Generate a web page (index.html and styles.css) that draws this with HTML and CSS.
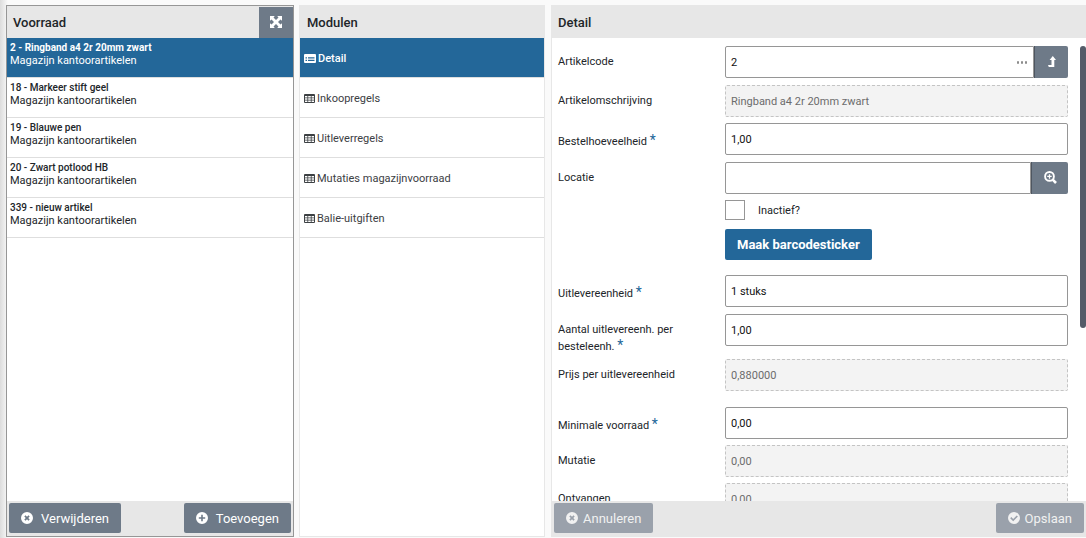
FILE: index.html
```html
<!DOCTYPE html>
<html lang="nl">
<head>
<meta charset="utf-8">
<title>Voorraad</title>
<link rel="stylesheet" href="styles.css">
</head>
<body>
<svg class="sprite" aria-hidden="true">
  <symbol id="i-table" viewBox="0 0 11 9"><path fill="currentColor" fill-rule="evenodd" d="M1 0h9a1 1 0 0 1 1 1v7a1 1 0 0 1-1 1H1a1 1 0 0 1-1-1V1a1 1 0 0 1 1-1zM1 2v1.600h2.400V2zm3.200 0v1.600h2.600V2zm3.400 0v1.600H10V2zM1 4.300v1.500h2.400V4.300zm3.200 0v1.500h2.600V4.300zm3.400 0v1.500H10V4.300zM1 6.500V8h2.400V6.500zm3.200 0V8h2.600V6.500zm3.400 0V8H10V6.500z"/></symbol>
  <symbol id="i-form" viewBox="0 0 12 9"><path fill="currentColor" fill-rule="evenodd" d="M1 0h10a1 1 0 0 1 1 1v7a1 1 0 0 1-1 1H1a1 1 0 0 1-1-1V1a1 1 0 0 1 1-1zM1.500 3.200v1.300H3V3.200zm2.500 0v1.300h6.500V3.200zM1.500 5.800v1.300H3V5.800zm2.500 0v1.300h6.500V5.800z"/></symbol>
  <symbol id="i-expand" viewBox="0 0 12 12"><path fill="currentColor" d="M0 0h4.800L3.500 1.500 6 4l2.500-2.500L7.200 0H12v4.800l-1.500-1.300L8 6l2.500 2.500L12 7.200V12H7.200l1.300-1.500L6 8l-2.500 2.500L4.800 12H0V7.200l1.500 1.300L4 6 1.500 3.500 0 4.800z"/></symbol>
  <symbol id="i-cross" viewBox="0 0 12 12"><path fill="currentColor" fill-rule="evenodd" d="M6 0a6 6 0 1 1 0 12A6 6 0 0 1 6 0zM4.500 3.300 3.300 4.500 4.800 6 3.300 7.500l1.200 1.200L6 7.200l1.500 1.500 1.200-1.200L7.200 6l1.500-1.500-1.200-1.200L6 4.800z"/></symbol>
  <symbol id="i-plus" viewBox="0 0 12 12"><path fill="currentColor" fill-rule="evenodd" d="M6 0a6 6 0 1 1 0 12A6 6 0 0 1 6 0zM5.200 2.800v2.400H2.800v1.600h2.400v2.400h1.600V6.800h2.400V5.200H6.800V2.800z"/></symbol>
  <symbol id="i-check" viewBox="0 0 12 12"><path fill="currentColor" fill-rule="evenodd" d="M6 0a6 6 0 1 1 0 12A6 6 0 0 1 6 0zM3.300 5.100 2.200 6.200l3 3 4.700-4.700-1.200-1.100-3.500 3.500z"/></symbol>
  <symbol id="i-level" viewBox="0 0 8 11"><path fill="currentColor" d="M4.800 0L8 4H6.300v7H.8L0 9h3.500V4H1.600z"/></symbol>
  <symbol id="i-zoom" viewBox="0 0 13 13"><path fill="none" stroke="currentColor" stroke-width="1.900" d="M5.500 1a4.400 4.400 0 1 1 0 8.800 4.400 4.400 0 0 1 0-8.800z"/><path fill="none" stroke="currentColor" stroke-width="2.600" d="M8.700 8.700 12 12"/><path fill="none" stroke="currentColor" stroke-width="1.300" d="M5.500 3.200v4.500M3.200 5.400h4.500"/></symbol>
</svg>
<div class="workspace">
  <section class="panel panel-active">
    <header class="panel-head">
      <h2>Voorraad</h2>
      <button class="expand" type="button" aria-label="Vergroten"><svg class="icon"><use href="#i-expand"/></svg></button>
    </header>
    <ul class="list">
      <li><a class="row stock selected" href="#"><b>2 - Ringband a4 2r 20mm zwart</b><span>Magazijn kantoorartikelen</span></a></li>
      <li><a class="row stock" href="#"><b>18 - Markeer stift geel</b><span>Magazijn kantoorartikelen</span></a></li>
      <li><a class="row stock" href="#"><b>19 - Blauwe pen</b><span>Magazijn kantoorartikelen</span></a></li>
      <li><a class="row stock" href="#"><b>20 - Zwart potlood HB</b><span>Magazijn kantoorartikelen</span></a></li>
      <li><a class="row stock" href="#"><b>339 - nieuw artikel</b><span>Magazijn kantoorartikelen</span></a></li>
    </ul>
    <footer class="panel-foot">
      <button class="btn btn-wide" type="button"><svg class="icon"><use href="#i-cross"/></svg>Verwijderen</button>
      <button class="btn btn-wide" type="button"><svg class="icon"><use href="#i-plus"/></svg>Toevoegen</button>
    </footer>
  </section>

  <section class="panel panel-modules">
    <header class="panel-head"><h2>Modulen</h2></header>
    <ul class="list">
      <li><a class="row module selected" href="#"><svg class="icon-form"><use href="#i-form"/></svg>Detail</a></li>
      <li><a class="row module" href="#"><svg class="icon-table"><use href="#i-table"/></svg>Inkoopregels</a></li>
      <li><a class="row module" href="#"><svg class="icon-table"><use href="#i-table"/></svg>Uitleverregels</a></li>
      <li><a class="row module" href="#"><svg class="icon-table"><use href="#i-table"/></svg>Mutaties magazijnvoorraad</a></li>
      <li><a class="row module" href="#"><svg class="icon-table"><use href="#i-table"/></svg>Balie-uitgiften</a></li>
    </ul>
  </section>

  <section class="panel panel-detail">
    <header class="panel-head"><h2>Detail</h2></header>
    <div class="detail-body">
      <form class="form">
        <div class="field">
          <label for="code">Artikelcode</label>
          <div class="combo">
            <div class="combo-box"><input id="code" type="text" value="2"><button class="more" type="button" aria-label="Meer"><i></i><i></i><i></i></button></div>
            <button class="addon" type="button" aria-label="Openen"><svg class="icon-level"><use href="#i-level"/></svg></button>
          </div>
        </div>
        <div class="field readonly">
          <label for="oms">Artikelomschrijving</label>
          <input class="text" id="oms" type="text" value="Ringband a4 2r 20mm zwart" disabled>
        </div>
        <div class="field required">
          <label for="bestel">Bestelhoeveelheid <span class="star">*</span></label>
          <input class="text" id="bestel" type="text" value="1,00">
        </div>
        <div class="field readonly">
          <label for="loc">Locatie</label>
          <div class="combo">
            <div class="combo-box"><input id="loc" type="text"></div>
            <button class="addon addon-zoom" type="button" aria-label="Zoeken"><svg class="icon-zoom"><use href="#i-zoom"/></svg></button>
          </div>
        </div>
        <div class="field actions">
          <div class="extra">
            <label class="check"><input type="checkbox">Inactief?</label>
            <button class="primary" type="button">Maak barcodesticker</button>
          </div>
        </div>
        <div class="field required group">
          <label for="uit">Uitlevereenheid <span class="star">*</span></label>
          <input class="text" id="uit" type="text" value="1 stuks">
        </div>
        <div class="field tall">
          <label for="aantal">Aantal uitlevereenh. per besteleenh. <span class="star">*</span></label>
          <input class="text" id="aantal" type="text" value="1,00">
        </div>
        <div class="field readonly">
          <label for="prijs">Prijs per uitlevereenheid</label>
          <input class="text" id="prijs" type="text" value="0,880000" disabled>
        </div>
        <div class="field readonly required group">
          <label for="min">Minimale voorraad <span class="star">*</span></label>
          <input class="text" id="min" type="text" value="0,00">
        </div>
        <div class="field readonly">
          <label for="mut">Mutatie</label>
          <input class="text" id="mut" type="text" value="0,00" disabled>
        </div>
        <div class="field readonly">
          <label for="ontv">Ontvangen</label>
          <input class="text" id="ontv" type="text" value="0,00" disabled>
        </div>
      </form>
      <div class="scroll"><div class="thumb"></div></div>
    </div>
    <footer class="panel-foot">
      <button class="btn" type="button" disabled><svg class="icon"><use href="#i-cross"/></svg>Annuleren</button>
      <button class="btn" type="button" disabled><svg class="icon"><use href="#i-check"/></svg>Opslaan</button>
    </footer>
  </section>
</div>
</body>
</html>
```
FILE: styles.css
```css
* { box-sizing: border-box; }
body {
  margin: 0;
  background: linear-gradient(to right, #dcdcdc, #fafafa 8px);
  color: #212529;
  font: 11px/17px Roboto, "Liberation Sans", sans-serif;
}
button, input { font: inherit; color: inherit; margin: 0; }
button { border: 0; padding: 0; }
ul { list-style: none; margin: 0; padding: 0; }
a { color: inherit; text-decoration: none; }
.sprite { display: none; }
.icon { width: 12px; height: 12px; flex: none; }
.icon-table { width: 11px; height: 9px; flex: none; }
.icon-form { width: 12px; height: 9px; flex: none; }
.icon-level { width: 8px; height: 11px; flex: none; }
.icon-zoom { width: 13px; height: 13px; flex: none; }

.workspace {
  display: grid;
  grid-template-columns: 288fr 246fr 536fr;
  gap: 5px;
  height: 100vh;
  padding: 5px 0 1px 6px;
}
.panel {
  display: flex;
  flex-direction: column;
  min-width: 0;
  min-height: 0;
  background: #fff;
  border: 1px solid #e7e7e7;
}
.panel-active { border-color: #969696; }
.panel-detail { border-right: 0; margin-left: 1px; }
.panel-head {
  display: flex;
  align-items: center;
  justify-content: space-between;
  flex: none;
  height: 32px;
  padding-left: 6px;
  background: #e7e7e7;
}
.panel-head h2 { margin: 0; font-size: 13px; font-weight: 500; }
.panel-modules .panel-head { padding-left: 7px; }
.expand {
  display: flex;
  align-items: center;
  justify-content: center;
  align-self: stretch;
  width: 34px;
  margin-top: 1px;
  padding-bottom: 1px;
  background: #6e7a88;
  color: #fff;
}
.list { flex: 1; }
.row {
  display: flex;
  height: 40px;
  border-bottom: 1px solid #dedede;
}
.stock { flex-direction: column; gap: 1px; padding: 4px 3px; line-height: 12px; }
.stock b { font-size: 10px; font-weight: 500; }
.module { align-items: center; gap: 2px; padding: 1px 0 0 4px; color: #3c4043; }
.module.selected { font-weight: 500; }
.row.selected { background: #236799; color: #fff; }
.selected b { font-weight: 700; }
.panel-foot {
  display: flex;
  justify-content: space-between;
  flex: none;
  padding: 2px 2px 3px;
  background: #e7e7e7;
}
.btn {
  display: flex;
  align-items: center;
  gap: 5px;
  height: 30px;
  padding: 0 12px;
  border-radius: 2px;
  background: #6e7a88;
  color: #fff;
  font-size: 13px;
}
.btn-wide { gap: 8px; }
.btn:disabled { background: #9aa1ab; color: #f1f1f1; }

.detail-body { display: flex; flex: 1; min-height: 0; gap: 12px; padding-top: 8px; overflow: hidden; }
.form { flex: 1; padding-left: 6px; }
.field {
  display: grid;
  grid-template-columns: 167fr 343fr;
  align-items: start;
  padding-bottom: 7px;
}
.readonly { padding-bottom: 6px; }
.actions { padding-bottom: 5px; }
.tall { padding-bottom: 4px; }
.group { margin-top: 10px; }
.field > label { padding: 7px 36px 0 0; }
.required > label { padding-top: 10px; }
.star { color: #236799; font-size: 14px; line-height: 10px; }
.text, .combo-box {
  width: 100%;
  height: 32px;
  padding: 0 5px;
  border: 1px solid #969696;
  border-radius: 2px;
  background: #fff;
  color: #111;
}
.text:disabled { border: 1px dashed #c4c4c4; background: #f3f3f3; color: #6c6c6c; }
.combo { display: flex; }
.combo-box { display: flex; align-items: center; flex: 1; border-radius: 2px 0 0 2px; }
.combo-box input { flex: 1; min-width: 0; border: 0; padding: 0; background: none; }
.more { display: flex; gap: 1px; padding-right: 1px; background: none; }
.more i { width: 2px; height: 3px; border-radius: 1px; background: #8c8c8c; }
.more { gap: 2px; }
.addon {
  display: flex;
  align-items: center;
  justify-content: center;
  width: 34px;
  height: 32px;
  padding-bottom: 2px;
  border-left: 1px solid #4e5661;
  border-radius: 0 2px 2px 0;
  background: #6e7a88;
  color: #fff;
}
.addon-zoom { width: 37px; }
.extra { grid-column: 2; display: flex; flex-direction: column; align-items: flex-start; gap: 9px; }
.check { display: flex; align-items: center; gap: 13px; height: 20px; }
.check input {
  appearance: none;
  width: 20px;
  height: 20px;
  border: 1px solid #969696;
  background: #fff;
}
.primary {
  height: 31px;
  padding: 0 12px;
  border-radius: 2px;
  background: #236799;
  color: #fff;
  font-size: 13px;
  font-weight: 700;
}
.scroll { width: 6px; }
.thumb { height: 62%; border-radius: 3px; background: #545b68; }
```
